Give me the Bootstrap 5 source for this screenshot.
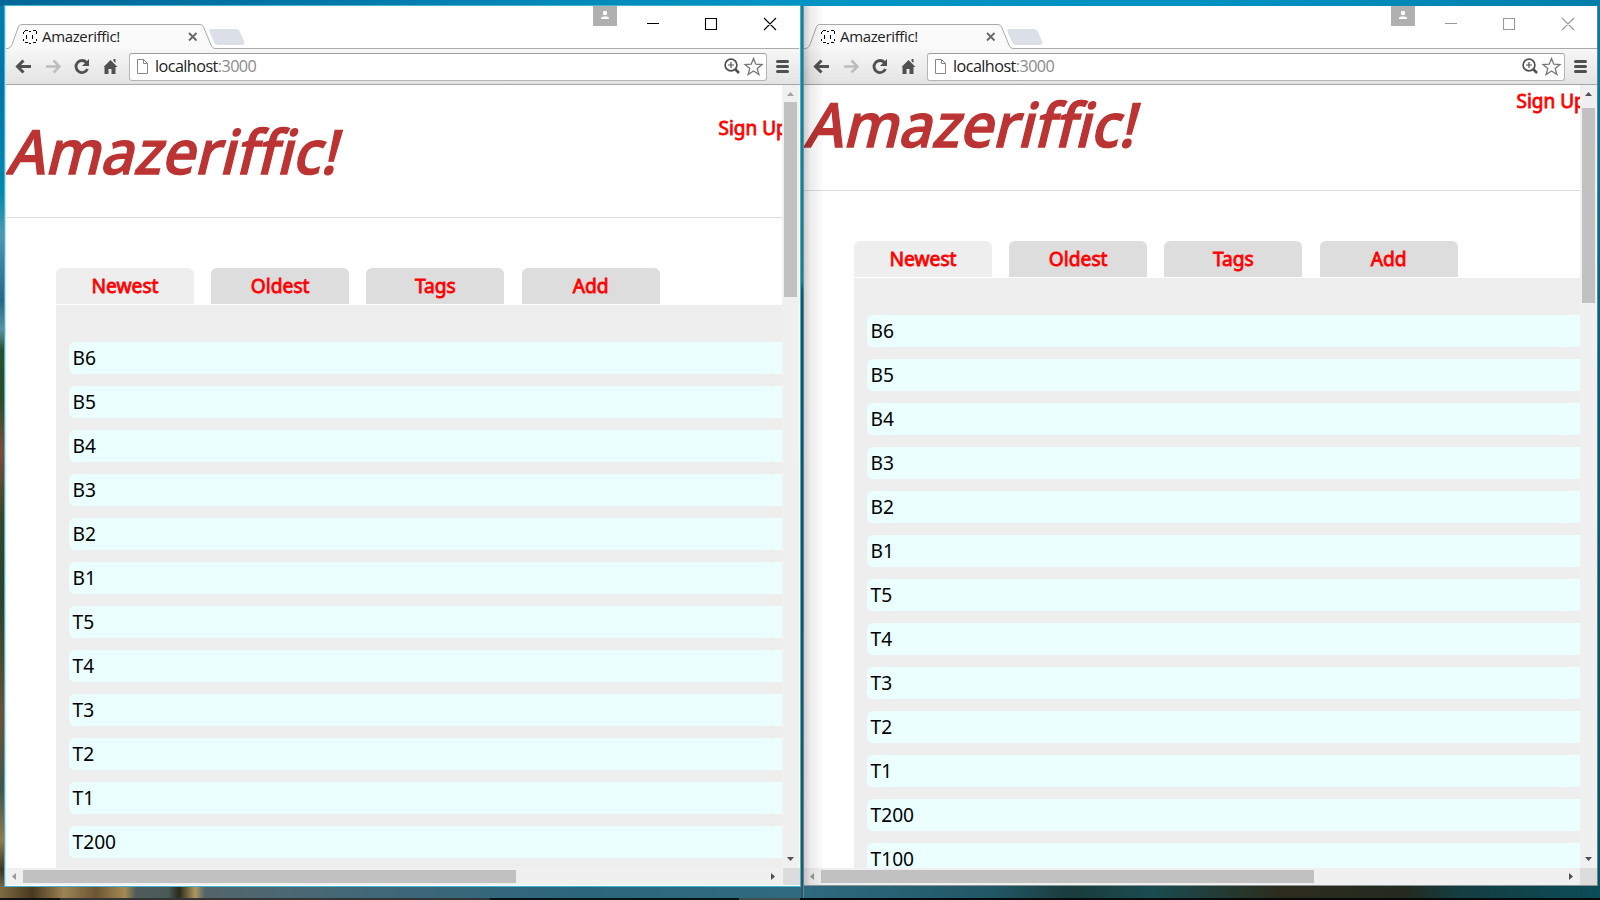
<!DOCTYPE html>
<html lang="en">
<head>
<meta charset="utf-8">
<title>Amazeriffic!</title>
<link href="https://cdn.jsdelivr.net/npm/bootstrap@5.3.0/dist/css/bootstrap.min.css" rel="stylesheet">
<style>
body{width:1600px;height:900px;font-family:"Noto Sans","Open Sans",sans-serif;color:#000;
 background:linear-gradient(180deg,#007cae 0,#0076a8 90px,#0089ae 190px,#4f98b0 235px,#276887 300px,#5b91a0 330px,#28502e 350px,#2b4b2a 400px,#7d4b38 450px,#36442a 520px,#2d402c 600px,#6d5136 720px,#44544c 790px,#927b4d 840px,#3d3425 870px,#a08c5b 900px)}
.strip-top{position:absolute;top:0;left:0;right:0;height:6px;background:linear-gradient(90deg,#006798,#0077a8 20%,#0089b9 35%,#0094c5 50%,#008fc0 80%,#007eaa)}
.strip-right{position:absolute;top:6px;right:0;bottom:0;width:3px;background:linear-gradient(#007fa8,#00617f 40%,#0b5567 70%,#07525f)}
.strip-bottom{position:absolute;left:0;right:0;bottom:0;height:14px;background:linear-gradient(90deg,#7e6b45 0,#49391f 2%,#9c8355 4%,#6b5534 6%,#a58953 7.800%,#4f5c59 8.500%,#4a5a58 10.500%,#2a2a1c 11.200%,#b09762 12.200%,#54656a 12.800%,#4b6873 18%,#3d6778 25%,#2c667d 36%,#2e6a80 50%,#215866 62%,#1a3c3c 67%,#1a4c50 72%,#2c2c1d 80%,#242a20 88%,#143d40 91%,#0b4d58)}
.taskbar{position:absolute;left:0;right:0;bottom:0;height:2px;background:linear-gradient(90deg,#111 60px,#333 60px,#333 490px,#081318 490px,#081318 739px,#444b4d 739px,#444b4d 800px,#05090b 800px)}
.win{background:#fff;position:relative}
.win1{margin:5px 0 0 4px;width:797px;height:882px;border:1px solid #45b3cd;padding-left:1px;box-shadow:inset 1px 0 #c5e5ec;flex:none}
.win2{margin:6px 0 0 3px;width:794px;height:880px;border-right:1px solid #698187;border-bottom:1px solid #8a9494;flex:none}
.edge-shade{position:absolute;left:0;top:0;bottom:0;width:20px;background:linear-gradient(90deg,rgba(0,0,0,.2),rgba(0,0,0,.08) 30%,transparent)}
.gapline{position:absolute;left:801px;top:5px;width:3px;height:893px;background:linear-gradient(90deg,transparent 2px,rgba(160,170,175,.5) 2px),linear-gradient(#12839c,#247a88 31%,#0d566d 32%,#155263 60%,#2b5668)}
.titlebar{height:43px;position:relative}
.titlebar svg,.bar svg{display:block}
.ttl{position:absolute;left:36px;top:18px;font:15px/24px "Open Sans","Noto Sans",sans-serif;letter-spacing:-.35px;color:#222}
.bar{height:36px;background:linear-gradient(#f7f7f7,#e3e3e3);border-bottom:1px solid #a6a6a6;position:relative}
.addr{position:absolute;left:123px;top:4px;width:638px;height:28px;background:#fff;border:1px solid #b5b5b5;border-top-color:#a0a0a0;border-radius:3px;font:16.200px/25px "Open Sans","Noto Sans",sans-serif;letter-spacing:-.56px;padding-left:25px;color:#222}
.addr span{color:#8a8a8a}
.over{position:absolute;left:0;top:0}
.view{height:783px;width:776px;overflow:hidden;background:#fff}
.hd{height:133px;border-bottom:1px solid #ddd;position:relative}
.win2 .hd{height:106px}
.brand{font:500 61px "Noto Sans",sans-serif;fill:#b33;stroke:#b33;stroke-width:1.300px}
.sign{position:absolute;left:712.500px;font:400 19px/26px "Noto Sans",sans-serif;-webkit-text-stroke:.8px red;color:red;white-space:nowrap}
.tabrow{margin:50px 0 0 50px;gap:17.200px;height:37px}
.tb{width:138px;height:36px;background:#ddd;border-radius:6px 6px 0 0;color:red;-webkit-text-stroke:.8px red;font-size:19.200px;line-height:36px;text-align:center;flex:none}
.tb.on{background:#eee}
.panel{margin-left:50px;background:#eee;padding:37px 0 0 13px;height:700px}
.item{height:32px;margin-bottom:12px;background:#ebffff;border-radius:6px 0 0 6px;padding-left:3.500px;font-size:19.200px;line-height:32px}
.vs{width:17px;background:#f0f0f0;position:relative}
.thumb{background:#c1c1c1;position:absolute}
.hs{height:17px;background:#f0f0f0;position:relative}
.corner{position:absolute;right:0;top:0;width:17px;height:17px;background:#dcdcdc}
</style>
</head>
<body class="d-flex align-items-start overflow-hidden position-relative">
<div class="strip-top"></div><div class="strip-right"></div><div class="strip-bottom"></div><div class="taskbar"></div><div class="gapline"></div>
<div class="win win1" data-ink="#000" data-items="B6 B5 B4 B3 B2 B1 T5 T4 T3 T2 T1 T200"></div>
<div class="win win2" data-ink="#999" data-items="B6 B5 B4 B3 B2 B1 T5 T4 T3 T2 T1 T200 T100"></div>
<script>
document.querySelectorAll('.win').forEach((w,i)=>{
 const ink=w.dataset.ink, up=i?'#505050':'#a3a3a3';
 w.innerHTML=`
 <div class="titlebar"><svg class="over" width="793" height="44" fill="none">
  <path d="M0 42.5h1c3 0 4-2 5-4L12 22c1-3 2-3.500 5-3.500H193c3 0 4 1 5 3.500L205 39c1 2.500 2 3.500 5 3.500H793V44H0Z" fill="#fafafa"/>
  <path d="M0 42.500h1c3 0 4-2 5-4L12 22c1-3 2-3.500 5-3.500H193c3 0 4 1 5 3.500L205 39c1 2.500 2 3.500 5 3.500H793" stroke="#aaa"/>
  <path d="M205 23h24c3 0 4 1 5 3l4 9c1 3 0 4-3 4h-22c-3 0-4-1-5-3l-4-9c-1-3-1-4 1-4Z" fill="#dbe0e8"/>
  <path d="M18 25.500h1m0-1h3m1 1h2m2-1h3m0 1h1M17.500 26v2M30.500 26v2M17.500 33v2M30.500 33v2M19 36.500h3m1 1h2m2-1h3M20.500 29v4M26.500 29v4" stroke="#000"/>
  <path d="M183 27l7.500 7.500M190.500 27l-7.500 7.500" stroke="#666" stroke-width="1.800"/>
  <path d="M587 0h24v20h-24z" fill="#b0b0b0"/><circle cx="599" cy="7" r="2.200" fill="#fff"/><path d="M595 13v-1c0-2 8-2 8 0v1z" fill="#fff"/>
  <path d="M641 17.500h12M699.500 12.500h11v11h-11zM758 12l12 12M770 12l-12 12" stroke="${ink}" stroke-width="1.100"/>
 </svg><div class="ttl">Amazeriffic!</div></div>
 <div class="bar"><div class="addr">localhost<span>:3000</span></div>
 <svg class="over" width="793" height="35" fill="none" stroke="#505050">
  <path d="M25 17.500H11.500M17.500 11.500l-6 6 6 6" stroke-width="3"/>
  <path d="M40 17.500H53M47.500 11.500l6 6-6 6" stroke="#bdbdbd" stroke-width="2.500"/>
  <path d="M80.500 13.500A6 6 0 1 0 81.500 20" stroke-width="2.800"/><path d="M83 10v7h-7z" fill="#505050" stroke="none"/>
  <path d="M97.500 18L104.500 11 111.500 18h-2v7h-4v-5h-3v5h-4v-7zM107.500 10h2v4l-2-2z" fill="#505050" stroke="none"/>
  <path d="M131.500 10.500h6l4 4v10h-10zM137.500 10.500v4h4" stroke="#888"/>
  <circle cx="725" cy="16" r="5.900" stroke-width="1.700"/><path d="M722 16h6M725 13v6" stroke-width="1.200"/><path d="M729 20l4 4" stroke-width="2.500"/>
  <path d="M747.500 9.500l2.300 5.700 6.200.300-4.800 4 1.700 6-5.400-3.500-5.400 3.500 1.700-6-4.800-4 6.200-.300z" stroke="#777" stroke-width="1.300"/>
  <path d="M771.500 12.500h10M771.500 17.500h10M771.500 22.500h10" stroke-width="3" stroke-linecap="round"/>
 </svg></div>
 <div class="d-flex"><div class="view">
  <div class="hd"><svg class="over" width="360" height="${i?105:132}"><text class="brand" transform="translate(0 ${i?62:89}) skewX(-14)" textLength="330" lengthAdjust="spacingAndGlyphs">Amazeriffic!</text></svg><div class="sign" style="top:${i?3:30}px">Sign Up</div></div>
  <div class="d-flex tabrow"><div class="tb on">Newest</div><div class="tb">Oldest</div><div class="tb">Tags</div><div class="tb">Add</div></div>
  <div class="panel">${w.dataset.items.split(' ').map(t=>`<div class="item">${t}</div>`).join('')}</div>
 </div><div class="vs"><svg class="over" width="17" height="783"><path d="M5 11h7L8.500 7z" fill="${up}"/><path d="M5 772h7l-3.500 4z" fill="#505050"/></svg><div class="thumb" style="left:2px;top:${i?23:17}px;width:13px;height:195px"></div></div></div>
 <div class="hs"><svg class="over" width="776" height="17"><path d="M10 5v7L6 8.500z" fill="#999"/><path d="M765 5v7l4-3.500z" fill="#505050"/></svg><div class="thumb" style="left:17px;top:2px;width:493px;height:13px"></div><div class="corner"></div></div>
 ${i?'<div class="edge-shade"></div>':''}`;
});
</script>
<script src="https://cdn.jsdelivr.net/npm/bootstrap@5.3.0/dist/js/bootstrap.bundle.min.js"></script>
</body>
</html>
